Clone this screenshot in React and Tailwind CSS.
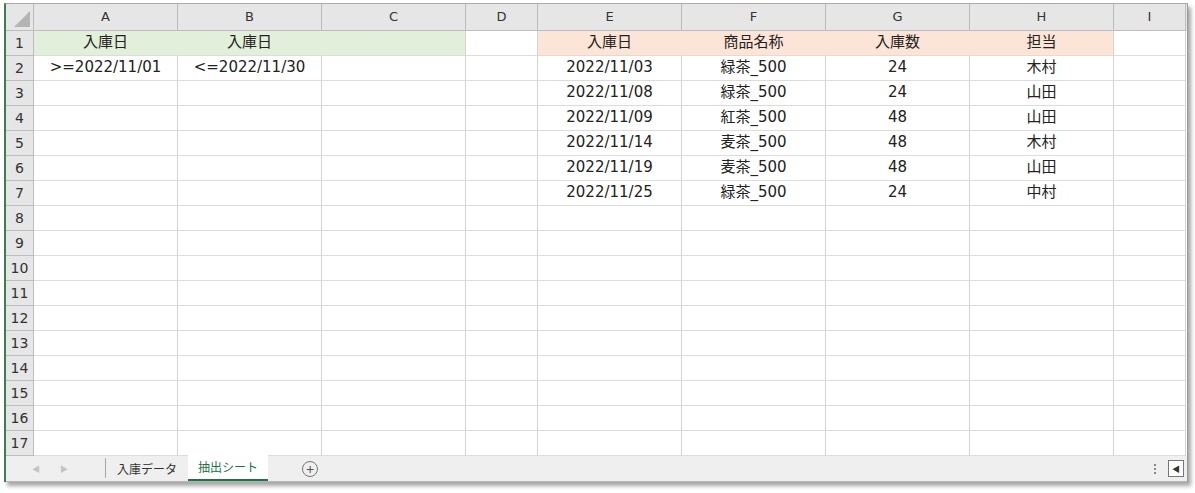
const cols = ['A', 'B', 'C', 'D', 'E', 'F', 'G', 'H', 'I']
const widths = ['w-[144px]', 'w-[144px]', 'w-[144px]', 'w-[72px]', 'w-[144px]', 'w-[144px]', 'w-[144px]', 'w-[144px]', 'w-[72px]']

const rows = [
  { A: '入庫日', B: '入庫日', E: '入庫日', F: '商品名称', G: '入庫数', H: '担当' },
  { A: '>=2022/11/01', B: '<=2022/11/30', E: '2022/11/03', F: '緑茶_500', G: '24', H: '木村' },
  { E: '2022/11/08', F: '緑茶_500', G: '24', H: '山田' },
  { E: '2022/11/09', F: '紅茶_500', G: '48', H: '山田' },
  { E: '2022/11/14', F: '麦茶_500', G: '48', H: '木村' },
  { E: '2022/11/19', F: '麦茶_500', G: '48', H: '山田' },
  { E: '2022/11/25', F: '緑茶_500', G: '24', H: '中村' },
]

function cellClass(r, c) {
  if (r === 0 && ['A', 'B', 'C'].includes(c)) {
    return c === 'C' ? 'bg-[#e2efda] border-r-[#d4d4d4]' : 'bg-[#e2efda] border-r-[#e2efda]'
  }
  if (r === 0 && ['E', 'F', 'G', 'H'].includes(c)) {
    return c === 'H' ? 'bg-[#fce4d6] border-r-[#d4d4d4]' : 'bg-[#fce4d6] border-r-[#fce4d6]'
  }
  return 'bg-white border-r-[#d4d4d4]'
}

export default function App() {
  const all = Array.from({ length: 17 }, (_, i) => rows[i] || {})
  return (
    <div className="w-[1195px] h-[493px] bg-white pt-[3px] pl-[4px]" style={{ fontFamily: '"DejaVu Sans", "Noto Sans CJK JP", sans-serif' }}>
      <div className="w-[1184px] flex flex-col border-l-2 border-l-[#3f7d54] border-t border-t-[#a9a9a9] border-r border-r-[#9a9a9a] shadow-[3px_4px_4px_rgba(0,0,0,0.35)]">
        {/* column header */}
        <div className="flex h-[27px] bg-[#e6e6e6] text-[13px] text-[#333]">
          <div className="w-[28px] border-r border-b border-[#bdbdbd] relative">
            <div className="absolute right-[3px] bottom-[3px] w-0 h-0 border-l-[16px] border-l-transparent border-b-[16px] border-b-[#b4b4b4]" />
          </div>
          {cols.map((c, i) => (
            <div key={c} className={`${widths[i]} flex items-center justify-center border-r border-b border-[#bdbdbd]`}>{c}</div>
          ))}
        </div>
        {all.map((row, r) => (
          <div key={r} className="flex h-[25px] text-[15px] text-[#222]">
            <div className="w-[28px] bg-[#e6e6e6] border-r border-b border-[#bdbdbd] flex items-center justify-center text-[14px] text-[#333]">{r + 1}</div>
            {cols.map((c, i) => (
              <div key={c} className={`${widths[i]} ${cellClass(r, c)} border-r border-b border-b-[#dcdcdc] flex items-center justify-center leading-none whitespace-nowrap pb-[1px]`}>
                {row[c] || ''}
              </div>
            ))}
          </div>
        ))}
        {/* sheet tabs */}
        <div className="flex items-stretch h-[26px] bg-[#efefef] text-[12px] text-[#333] border-b border-[#b5b5b5]" style={{ fontFamily: '"Noto Sans CJK JP", sans-serif' }}>
          <div className="w-[99px] flex items-center gap-[20px] pl-[26px] text-[#c4c4c4] text-[8px]">
            <span>◀</span>
            <span>▶</span>
          </div>
          <div className="w-px h-[20px] mt-[2px] bg-[#a8a8a8]" />
          <div className="flex items-center pl-[11px] pr-[11px]">入庫データ</div>
          <div className="flex items-center px-[10px] bg-white text-[#1e7145] border-b-2 border-[#1e7145] -mt-px">抽出シート</div>
          <div className="flex items-center pl-[34px]">
            <div className="w-[16px] h-[16px] rounded-full border border-[#777] flex items-center justify-center text-[#555] text-[14px] leading-none">+</div>
          </div>
          <div className="flex-1" />
          <div className="flex flex-col justify-center gap-[2px] mr-[12px]">
            <span className="w-[2px] h-[2px] bg-[#888]" />
            <span className="w-[2px] h-[2px] bg-[#888]" />
            <span className="w-[2px] h-[2px] bg-[#888]" />
          </div>
          <div className="flex items-center mr-[3px]">
            <div className="w-[16px] h-[17px] bg-white border border-[#777] flex items-center justify-center text-[8px] text-[#333]">◀</div>
          </div>
        </div>
      </div>
    </div>
  )
}
